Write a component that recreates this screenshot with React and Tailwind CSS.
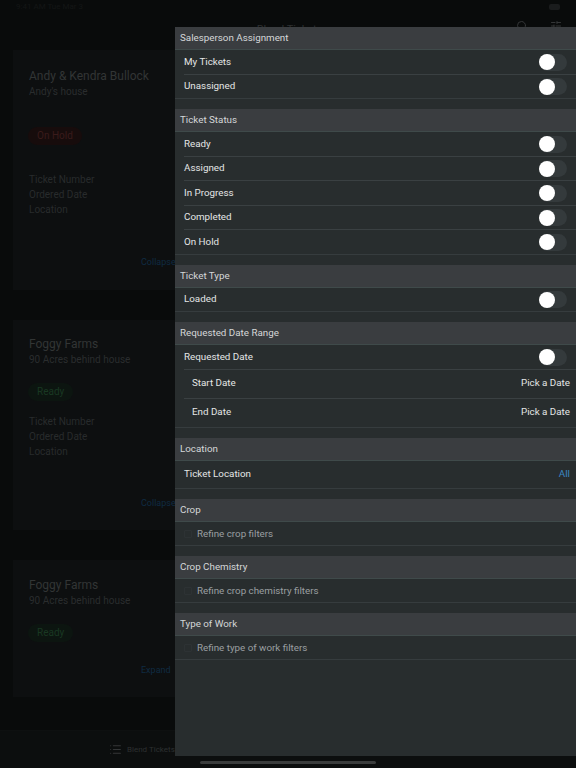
import React from "react";
import { Search, SlidersHorizontal, List } from "lucide-react";

const Toggle = () => (
  <div className="relative h-[17px] w-[28px] rounded-full bg-[#343a3c]">
    <div className="absolute left-0 top-[0.5px] h-[16px] w-[16px] rounded-full bg-white"></div>
  </div>
);

const SectionHeader = ({ title }) => (
  <div className="flex h-[23px] items-center border-b border-[#3f4a4a] bg-[#3a3d40] pl-[5px] pt-px text-[#d5d7d8]">
    {title}
  </div>
);

const ToggleRow = ({ label, last }) => (
  <div className={`flex h-[24.5px] items-center justify-between border-b pr-[9.5px] pt-px text-[#e4e6e6] ${last ? "border-[#363c3e]" : "ml-[9px] border-[#3a4042]"}`}>
    <span className={last ? "pl-[9px]" : ""}>{label}</span>
    <Toggle />
  </div>
);

const DateRow = ({ label, last }) => (
  <div className={`flex h-[29px] items-center justify-between border-b pr-[6px] text-[#e4e6e6] ${last ? "border-[#363c3e] pl-[17px]" : "ml-[9px] border-[#3a4042] pl-[8px]"}`}>
    <span>{label}</span>
    <span>Pick a Date</span>
  </div>
);

const RefineRow = ({ label }) => (
  <div className="flex h-[24px] items-center gap-[5px] border-b border-[#363c3e] pl-[9px] pt-[2px] text-[#9a9fa1]">
    <span className="h-[8px] w-[8px] rounded-[1px] border border-[#2d3234]"></span>
    <span>{label}</span>
  </div>
);

const Group = ({ title, children }) => (
  <div className="mb-[10px]">
    <SectionHeader title={title} />
    {children}
  </div>
);

const TicketCard = ({ name, place, status, statusClass, pillTop, infoTop, link, linkTop, height, nameTop, info }) => (
  <div className={`mx-[13px] flex flex-col bg-[#0d0f10] pl-[16px] ${height}`}>
    <div className={`text-[12px] leading-[16px] text-[#323535] ${nameTop}`}>{name}</div>
    <div className="text-[10px] leading-[15px] text-[#2a2d2e]">{place}</div>
    <div className={`-ml-[1px] w-fit rounded-full px-[9px] py-[3px] text-[10px] leading-[12px] ${statusClass} ${pillTop}`}>{status}</div>
    {info && (
      <div className={`text-[10px] leading-[15px] text-[#282b2c] ${infoTop}`}>
        <div>Ticket Number</div>
        <div>Ordered Date</div>
        <div>Location</div>
      </div>
    )}
    <div className={`absolute left-[141px] text-[9px] text-[#0f2b42] ${linkTop}`}>{link}</div>
  </div>
);

export default function App() {
  return (
    <div className="relative h-[768px] w-[576px] overflow-hidden bg-[#090b0b] font-['Roboto',sans-serif] text-[9.8px]">
      {/* page behind the filter sheet */}
      <div className="flex h-[20px] items-start justify-between px-[16px] pt-[1px] text-[8px] text-[#141616]">
        <span>9:41 AM Tue Mar 3</span>
        <div className="mt-[3px] h-[6px] w-[11px] rounded-[2px] bg-[#1a1c1d]"></div>
      </div>
      <div className="relative flex h-[30px] items-start justify-center text-[11px] text-[#2d3031]">
        <span className="ml-[3px] mt-[2px]">Blend Tickets</span>
        <Search className="absolute left-[516px] top-0 h-[12px] w-[12px] text-[#343637]" />
        <SlidersHorizontal className="absolute left-[550px] top-0 h-[12px] w-[12px] text-[#343637]" />
      </div>
      <TicketCard
        name="Andy & Kendra Bullock"
        place="Andy's house"
        status="On Hold"
        statusClass="bg-[#170c0c] text-[#3a1b1b]"
        pillTop="mt-[28px]"
        infoTop="mt-[27px]"
        link="Collapse"
        linkTop="top-[256px]"
        height="h-[240px]"
        nameTop="mt-[18px]"
        info
      />
      <div className="h-[30px]"></div>
      <TicketCard
        name="Foggy Farms"
        place="90 Acres behind house"
        status="Ready"
        statusClass="bg-[#0c1510] text-[#193822]"
        pillTop="mt-[16px]"
        infoTop="mt-[13px]"
        link="Collapse"
        linkTop="top-[497px]"
        height="h-[210px]"
        nameTop="mt-[16px]"
        info
      />
      <div className="h-[30px]"></div>
      <TicketCard
        name="Foggy Farms"
        place="90 Acres behind house"
        status="Ready"
        statusClass="bg-[#0c1510] text-[#193822]"
        pillTop="mt-[16px]"
        link="Expand"
        linkTop="top-[664px]"
        height="h-[137px]"
        nameTop="mt-[17px]"
      />
      <div className="absolute bottom-0 left-0 flex h-[38px] w-full items-center border-t border-[#0e1010] bg-[#0c0e0e] pl-[109px] text-[8px] text-[#2d3031]">
        <List className="mr-[5px] h-[13px] w-[13px] text-[#343637]" />
        <span>Blend Tickets</span>
      </div>

      {/* filter sheet */}
      <div className="absolute bottom-[12px] right-0 top-[27px] w-[401px] bg-[#282d2e]">
        <Group title="Salesperson Assignment">
          <ToggleRow label="My Tickets" />
          <ToggleRow label="Unassigned" last />
        </Group>
        <Group title="Ticket Status">
          <ToggleRow label="Ready" />
          <ToggleRow label="Assigned" />
          <ToggleRow label="In Progress" />
          <ToggleRow label="Completed" />
          <ToggleRow label="On Hold" last />
        </Group>
        <Group title="Ticket Type">
          <ToggleRow label="Loaded" last />
        </Group>
        <Group title="Requested Date Range">
          <ToggleRow label="Requested Date" />
          <DateRow label="Start Date" />
          <DateRow label="End Date" last />
        </Group>
        <Group title="Location">
          <div className="flex h-[28px] items-center justify-between border-b border-[#363c3e] pl-[9px] pr-[6px] pt-px text-[#e4e6e6]">
            <span>Ticket Location</span>
            <span className="text-[#3b87c4]">All</span>
          </div>
        </Group>
        <Group title="Crop">
          <RefineRow label="Refine crop filters" />
        </Group>
        <Group title="Crop Chemistry">
          <RefineRow label="Refine crop chemistry filters" />
        </Group>
        <Group title="Type of Work">
          <RefineRow label="Refine type of work filters" />
        </Group>
      </div>
      <div className="absolute bottom-[4px] left-[200px] h-[3px] w-[176px] rounded-full bg-[#3a3c3c]"></div>
    </div>
  );
}
